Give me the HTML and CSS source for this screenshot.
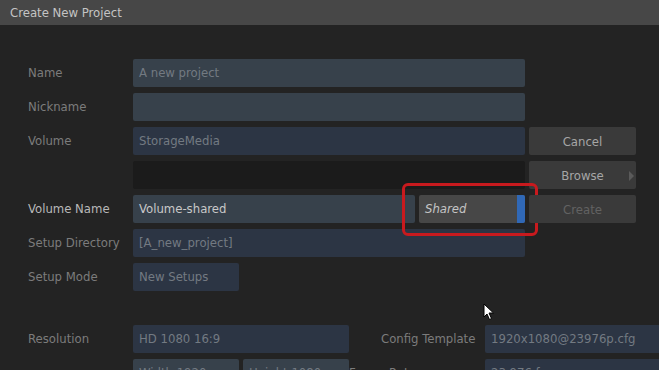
FILE: index.html
```html
<!DOCTYPE html>
<html lang="en">
<head>
    <meta charset="UTF-8">
    <meta name="viewport" content="width=device-width, initial-scale=1.0">
    <title>Create New Project</title>
    <link rel="stylesheet" href="styles.css">
</head>
<body>
    <div class="titlebar">Create New Project</div>

    <div class="dialog">
        <div class="form">
            <label class="label">Name</label>
            <div class="field light dim wide">A new project</div>
            <div></div>

            <label class="label">Nickname</label>
            <div class="field light wide"></div>
            <div></div>

            <label class="label">Volume</label>
            <div class="field blue dim wide">StorageMedia</div>
            <button class="btn">Cancel</button>

            <div></div>
            <div class="field black wide"></div>
            <button class="btn browse">Browse <span class="arrow"></span></button>

            <label class="label active">Volume Name</label>
            <div class="split">
                <div class="field light bright">Volume-shared</div>
                <div class="dropdown">Shared<span class="bar"></span></div>
                <div class="highlight"></div>
            </div>
            <button class="btn disabled">Create</button>

            <label class="label">Setup Directory</label>
            <div class="field blue dim wide">[A_new_project]</div>
            <div></div>

            <label class="label">Setup Mode</label>
            <div class="field blue dim small">New Setups</div>
            <div></div>
        </div>

        <div class="settings">
            <label class="label">Resolution</label>
            <div class="field blue dim">HD 1080 16:9</div>
            <label class="label">Config Template</label>
            <div class="field blue dim">1920x1080@23976p.cfg</div>

            <div></div>
            <div class="pair">
                <div class="field light dim">Width 1920</div>
                <div class="field light dim">Height 1080</div>
            </div>
            <label class="label">Frame Rate</label>
            <div class="field blue dim">23.976 fps</div>
        </div>
    </div>

    <svg class="cursor" width="12" height="18" viewBox="0 0 12 18">
        <path d="M1 1 L1 14 L4 11 L6.5 16.5 L8.5 15.5 L6 10 L10.5 10 Z" fill="#fff" stroke="#000" stroke-width="1"/>
    </svg>
</body>
</html>
```

FILE: styles.css
```css
body {
    margin: 0;
    padding: 0;
    background-color: #232323;
    font-family: "Liberation Sans Narrow", "DejaVu Sans Condensed", Roboto, sans-serif;
    font-size: 13px;
    color: #888;
    width: 659px;
    height: 370px;
    overflow: hidden;
    position: relative;
}

.titlebar {
    height: 25px;
    line-height: 26px;
    background-color: #474747;
    color: #c4c4c4;
    padding-left: 10px;
}

.dialog {
    padding: 34px 0 0 28px;
}

.form {
    display: grid;
    grid-template-columns: 101px 392px 107px;
    grid-auto-rows: 28px;
    column-gap: 4px;
    row-gap: 6px;
}

.label {
    line-height: 28px;
    color: #7c7c7c;
    white-space: nowrap;
}

.label.active {
    color: #b8b8b8;
}

.field {
    border-radius: 2px;
    line-height: 28px;
    padding-left: 6px;
    color: #737a82;
    white-space: nowrap;
    overflow: hidden;
}

.light {
    background-color: #37414b;
}

.blue {
    background-color: #2c3544;
}

.black {
    background-color: #1b1b1b;
}

.bright {
    color: #c8c8c8;
}

.small {
    width: 100px;
}

.btn {
    font: inherit;
    border: none;
    border-radius: 2px;
    background-color: #3a3a3a;
    color: #a6a6a6;
    padding: 0;
    height: 28px;
    position: relative;
}

.btn.disabled {
    color: #626262;
}

.arrow {
    position: absolute;
    right: 2px;
    top: 10px;
    border-left: 5px solid #5a5a5a;
    border-top: 5px solid transparent;
    border-bottom: 5px solid transparent;
}

.split {
    display: flex;
    gap: 4px;
    position: relative;
}

.split .field {
    flex: 1;
}

.dropdown {
    width: 106px;
    background-color: #474747;
    border-radius: 2px;
    color: #c4c4c4;
    font-style: italic;
    line-height: 28px;
    padding-left: 6px;
    box-sizing: border-box;
    position: relative;
}

.dropdown .bar {
    position: absolute;
    right: 0;
    top: 0;
    bottom: 0;
    width: 8px;
    background-color: #3068b6;
    border-radius: 0 2px 2px 0;
}

.highlight {
    position: absolute;
    left: 269px;
    top: -12px;
    width: 130px;
    height: 47px;
    border: 3px solid #c81a1e;
    border-radius: 6px;
}

.settings {
    display: grid;
    grid-template-columns: 105px 216px 104px 240px;
    grid-auto-rows: 28px;
    row-gap: 6px;
    margin-top: 34px;
}

.settings .label:nth-of-type(2) {
    padding-left: 32px;
}

.settings > .field:nth-of-type(2),
.settings > .field:last-child {
    margin-left: 32px;
}

.pair {
    display: grid;
    grid-template-columns: 106px 106px;
    gap: 4px;
}

.cursor {
    position: absolute;
    left: 483px;
    top: 303px;
}
```
